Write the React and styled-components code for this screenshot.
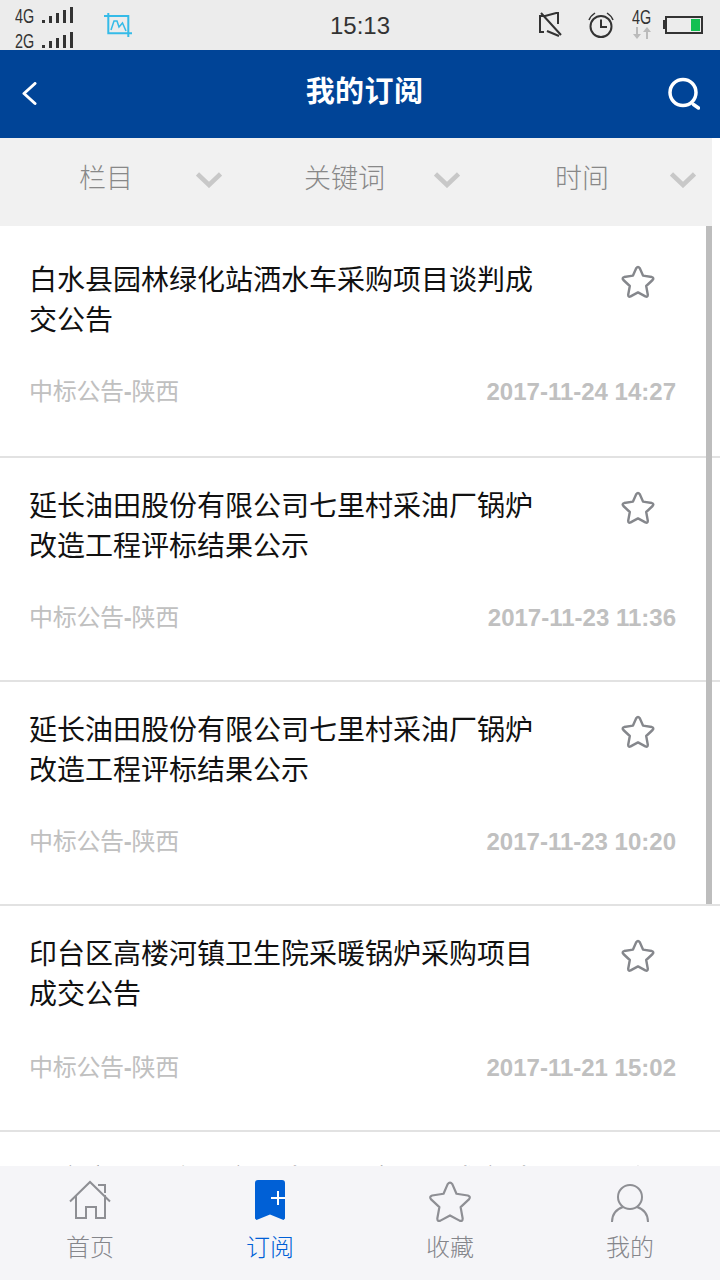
import React from 'react';
import styled, { createGlobalStyle } from 'styled-components';

const GlobalStyle = createGlobalStyle`
  html, body {
    margin: 0;
    padding: 0;
    background: #fff;
  }
  body {
    font-family: "Liberation Sans", "Noto Sans CJK SC", sans-serif;
  }
`;

const Page = styled.div`
  width: 720px;
  height: 1280px;
  display: flex;
  flex-direction: column;
  overflow: hidden;
`;

const StatusBar = styled.div`
  height: 50px;
  flex: none;
  background: #ececec;
  display: grid;
  grid-template-columns: 1fr auto 1fr;
  align-items: center;
  color: #333;
  overflow: hidden;
`;

const StatusLeft = styled.div`
  display: flex;
  align-items: center;
  padding-left: 15px;
  gap: 31px;
`;

const SignalStack = styled.div`
  display: flex;
  flex-direction: column;
  gap: 6px;
  margin-top: 2px;
`;

const SignalRow = styled.div`
  display: flex;
  align-items: flex-end;
  gap: 7px;
  height: 19px;
`;

const NetLabel = styled.span`
  font-size: 20px;
  line-height: 19px;
  color: #333;
  width: 20px;
  margin-bottom: -3px;
  white-space: nowrap;
  transform: scaleX(0.72);
  transform-origin: left center;
`;

const Bars = styled.div`
  display: flex;
  align-items: flex-end;
  gap: 4px;
  height: 16px;
`;

const Bar = styled.i`
  display: block;
  width: 3px;
  height: ${(p) => p.$h}px;
  background: #333;
`;

const Clock = styled.div`
  font-size: 24px;
  color: #333;
  padding-top: 2px;
`;

const StatusRight = styled.div`
  display: flex;
  justify-content: flex-end;
  align-items: center;
  padding-right: 17px;
`;

const AlarmSlot = styled.div`
  margin-left: 25px;
  display: flex;
`;

const NetStack = styled.div`
  display: flex;
  flex-direction: column;
  align-items: center;
  width: 20px;
  margin: 0 13px 0 18px;
`;

const NetSmall = styled(NetLabel)`
  line-height: 12px;
  margin-bottom: 4px;
`;

const Battery = styled.div`
  width: 32px;
  height: 12px;
  border: 2px solid #333;
  display: flex;
  justify-content: flex-end;
  padding: 1px;
  position: relative;
  &::before {
    content: '';
    position: absolute;
    left: -4px;
    top: 2px;
    width: 2px;
    height: 9px;
    background: #333;
  }
`;

const BatteryLevel = styled.div`
  width: 9px;
  background: #12c052;
`;

const NavBar = styled.div`
  height: 88px;
  flex: none;
  background: #004497;
  display: flex;
  align-items: center;
  justify-content: space-between;
  padding: 0 20px 0 21px;
  position: relative;
`;

const NavTitle = styled.div`
  position: absolute;
  left: 0;
  right: 0;
  padding: 0 0 10px 9px;
  text-align: center;
  color: #fff;
  font-size: 29px;
  letter-spacing: 0.4px;
  font-weight: 700;
  pointer-events: none;
`;

const FilterWrap = styled.div`
  flex: none;
  height: 88px;
  padding-right: 8px;
  background: #fff;
`;

const FilterBar = styled.div`
  height: 100%;
  background: #f1f1f1;
  display: grid;
  grid-template-columns: 238px 238px 1fr;
`;

const FilterItem = styled.div`
  display: flex;
  align-items: center;
  justify-content: space-between;
  padding: 0 16px 12px ${(p) => p.$left}px;
  color: #888;
  font-size: 27px;
  font-weight: 300;
  svg {
    margin-top: 8px;
  }
`;

const List = styled.div`
  flex: 1;
  min-height: 0;
  position: relative;
  overflow: hidden;
`;

const ScrollThumb = styled.div`
  position: absolute;
  top: 0;
  right: 8px;
  width: 6px;
  height: 678px;
  background: #bdbdbd;
`;

const Row = styled.div`
  height: ${(p) => p.$height}px;
  box-sizing: border-box;
  padding: ${(p) => p.$top}px 44px 0 29px;
  border-bottom: 2px solid #e2e2e2;
  display: flex;
  flex-direction: column;
`;

const RowTop = styled.div`
  display: flex;
  justify-content: space-between;
  align-items: flex-start;
`;

const RowTitle = styled.div`
  width: 510px;
  font-size: 28px;
  line-height: 40px;
  color: #111;
`;

const StarSlot = styled.div`
  margin: 4px 21px 0 0;
  width: 34px;
  height: 34px;
`;

const RowMeta = styled.div`
  display: flex;
  justify-content: space-between;
  align-items: center;
  margin-top: ${(p) => p.$gap}px;
  color: #c0c0c0;
  font-size: 24px;
  line-height: 32px;
`;

const RowSource = styled.span`
  letter-spacing: -0.3px;
`;

const Dash = styled.span`
  font-weight: 700;
`;

const RowDate = styled.span`
  font-weight: 700;
`;

const TabBar = styled.div`
  flex: none;
  height: 114px;
  background: #f5f5f8;
  display: grid;
  grid-template-columns: repeat(4, 1fr);
`;

const Tab = styled.div`
  display: flex;
  flex-direction: column;
  align-items: center;
  padding-top: 14px;
  color: ${(p) => (p.$active ? '#0060d6' : '#85868b')};
`;

const TabIcon = styled.div`
  height: 44px;
  display: flex;
  align-items: flex-start;
  justify-content: center;
`;

const TabLabel = styled.div`
  font-size: 24px;
  font-weight: 300;
  line-height: 30px;
  margin-top: 9px;
`;

const Chevron = () => (
  <svg width="26" height="16" viewBox="0 0 26 16" fill="none" stroke="#c8c8c8" strokeWidth="4.5">
    <path d="M1.500 2L13 13 24.500 2" />
  </svg>
);

const BackIcon = () => (
  <svg width="16" height="24" viewBox="0 0 16 24" fill="none" stroke="#fff" strokeWidth="3" strokeLinecap="round" strokeLinejoin="round">
    <path d="M14 1.500L3 11.500l11 10" />
  </svg>
);

const SearchIcon = () => (
  <svg width="34" height="34" viewBox="0 0 34 34" fill="none" stroke="#fff" strokeLinecap="round">
    <circle cx="17" cy="15.500" r="13" strokeWidth="3.500" />
    <path d="M27.500 27.500l5 3.500" strokeWidth="3.500" />
  </svg>
);

const ScreenshotIcon = () => (
  <svg width="28" height="24" viewBox="0 0 28 24" fill="none" stroke="#35bbe8" strokeWidth="2">
    <path d="M0 3h24.300v21M4.300 0v20.300H28" />
    <path d="M7 17l3-9h3l2 6 3.500-4 3.500 8" strokeWidth="1.500" />
  </svg>
);

const MuteIcon = () => (
  <svg width="24" height="26" viewBox="0 0 24 26" fill="none" stroke="#333" strokeWidth="2">
    <path d="M6 4H1v16h4M6 4l13-3.500V12M8 19l12 5M2 1l20 22" />
  </svg>
);

const AlarmIcon = () => (
  <svg width="26" height="26" viewBox="0 0 26 26" fill="none" stroke="#333" strokeWidth="2">
    <circle cx="13" cy="14.500" r="10.500" />
    <path d="M13 7.500V15h6" />
    <path d="M1 8c1-3 3-5 6-7M25 8c-1-3-3-5-6-7" strokeWidth="1.500" />
  </svg>
);

const NetArrows = () => (
  <svg width="18" height="12" viewBox="0 0 18 12" fill="#bbb">
    <path d="M3 0h2v7h3l-4 5-4-5h3zM13 12h2V5h3l-4-5-4 5h3z" />
  </svg>
);

const starPath =
  'M15.200 3.200Q17 .8 18.800 3.200L22 10.600 30.800 12Q33.400 13 31.600 15L25.200 21 26.800 29.800Q26.800 32.400 24.400 31.400L17 27.400 9.600 31.400Q7.200 32.400 7.200 29.800L8.800 21 2.400 15Q.6 13 3.200 12L12 10.600Z';

const StarOutline = ({ size = 34, color = '#85878c', width = 2.4 }) => (
  <svg width={size} height={size} viewBox="0 0 34 34" fill="none" stroke={color} strokeWidth={width} strokeLinejoin="round">
    <path d={starPath} />
  </svg>
);

const HomeIcon = () => (
  <svg width="42" height="40" viewBox="0 -1 42 40" fill="none" stroke="#8e8f94" strokeWidth="2">
    <path d="M1 20.500L21 1l20 19.500" />
    <path d="M7 14v23h10V26h10v11h9V14" />
    <path d="M29 4h7v8" />
  </svg>
);

const BookmarkIcon = () => (
  <svg width="30" height="40" viewBox="0 0 30 40">
    <path d="M3 0h24a3 3 0 0 1 3 3v35.500L28.500 40 15 34.500 1.500 40 0 38.500V3a3 3 0 0 1 3-3z" fill="#0060d6" />
    <path d="M23 11v14M16 18h14" stroke="#fff" strokeWidth="2" />
  </svg>
);

const UserIcon = () => (
  <svg width="38" height="44" viewBox="0 0 38 44" fill="none" stroke="#8e8f94" strokeWidth="2">
    <circle cx="19" cy="17" r="12" />
    <path d="M1 42c0-8 5-13 11-15M37 42c0-8-5-13-11-15" />
  </svg>
);

const signal = [3, 7, 10, 13, 16];

const SignalBars = () => (
  <Bars>
    {signal.map((h) => (
      <Bar key={h} $h={h} />
    ))}
  </Bars>
);

const items = [
  { title: '白水县园林绿化站洒水车采购项目谈判成交公告', date: '2017-11-24 14:27', height: 232, top: 35, gap: 35 },
  { title: '延长油田股份有限公司七里村采油厂锅炉改造工程评标结果公示', date: '2017-11-23 11:36', height: 224, top: 29, gap: 35 },
  { title: '延长油田股份有限公司七里村采油厂锅炉改造工程评标结果公示', date: '2017-11-23 10:20', height: 224, top: 29, gap: 35 },
  { title: '印台区高楼河镇卫生院采暖锅炉采购项目成交公告', date: '2017-11-21 15:02', height: 226, top: 29, gap: 37 },
  { title: '西安市公共资源交易中心采购项目成交结果公告', date: '2017-11-21 09:48', height: 224, top: 29, gap: 35 },
];

export default function App() {
  return (
    <Page>
      <GlobalStyle />
      <StatusBar>
        <StatusLeft>
          <SignalStack>
            <SignalRow>
              <NetLabel>4G</NetLabel>
              <SignalBars />
            </SignalRow>
            <SignalRow>
              <NetLabel>2G</NetLabel>
              <SignalBars />
            </SignalRow>
          </SignalStack>
          <ScreenshotIcon />
        </StatusLeft>
        <Clock>15:13</Clock>
        <StatusRight>
          <MuteIcon />
          <AlarmSlot>
            <AlarmIcon />
          </AlarmSlot>
          <NetStack>
            <NetSmall>4G</NetSmall>
            <NetArrows />
          </NetStack>
          <Battery>
            <BatteryLevel />
          </Battery>
        </StatusRight>
      </StatusBar>
      <NavBar>
        <BackIcon />
        <NavTitle>我的订阅</NavTitle>
        <SearchIcon />
      </NavBar>
      <FilterWrap>
        <FilterBar>
          <FilterItem $left={79}>
            栏目
            <Chevron />
          </FilterItem>
          <FilterItem $left={66}>
            关键词
            <Chevron />
          </FilterItem>
          <FilterItem $left={79}>
            时间
            <Chevron />
          </FilterItem>
        </FilterBar>
      </FilterWrap>
      <List>
        {items.map((item) => (
          <Row key={item.date} $height={item.height} $top={item.top}>
            <RowTop>
              <RowTitle>{item.title}</RowTitle>
              <StarSlot>
                <StarOutline />
              </StarSlot>
            </RowTop>
            <RowMeta $gap={item.gap}>
              <RowSource>
                中标公告<Dash>-</Dash>陕西
              </RowSource>
              <RowDate>{item.date}</RowDate>
            </RowMeta>
          </Row>
        ))}
        <ScrollThumb />
      </List>
      <TabBar>
        <Tab>
          <TabIcon>
            <HomeIcon />
          </TabIcon>
          <TabLabel>首页</TabLabel>
        </Tab>
        <Tab $active>
          <TabIcon>
            <BookmarkIcon />
          </TabIcon>
          <TabLabel>订阅</TabLabel>
        </Tab>
        <Tab>
          <TabIcon>
            <StarOutline size={44} width={1.7} color="#8e8f94" />
          </TabIcon>
          <TabLabel>收藏</TabLabel>
        </Tab>
        <Tab>
          <TabIcon>
            <UserIcon />
          </TabIcon>
          <TabLabel>我的</TabLabel>
        </Tab>
      </TabBar>
    </Page>
  );
}
